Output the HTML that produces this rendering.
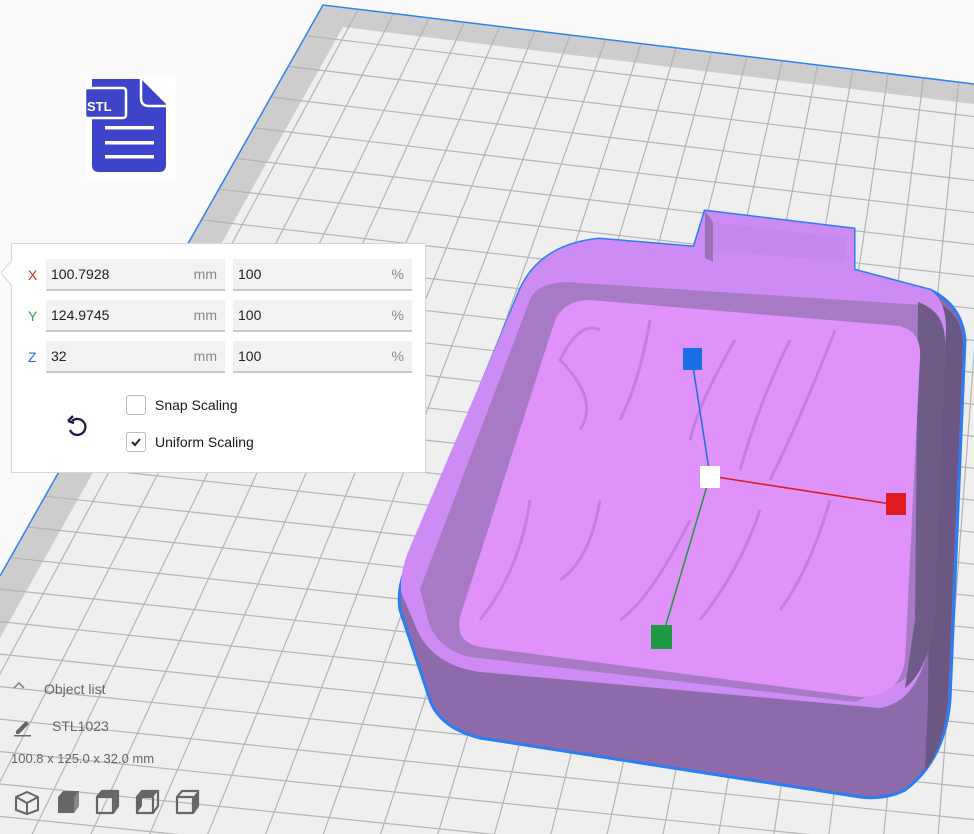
<!DOCTYPE html>
<html><head><meta charset="utf-8"><style>
html,body{margin:0;padding:0;width:974px;height:834px;overflow:hidden;background:#fafafa;font-family:"Liberation Sans",sans-serif}
#scene{position:absolute;left:0;top:0;display:block}
.panel{position:absolute;left:11px;top:243px;width:415px;height:230px;background:#fff;border:1px solid #d6d6d6;box-sizing:border-box}
.fld{position:absolute;height:32px;background:#f2f2f2;border-bottom:2px solid #c8c8c8;box-sizing:border-box;font-size:14px;color:#222;line-height:31px;padding-left:5px}
.fld .u{position:absolute;right:8px;top:0;color:#8a8a8a}
.lab{position:absolute;font-size:14px;line-height:32px}
.cb{position:absolute;left:114px;width:20px;height:20px;border:1px solid #bbb;border-radius:3px;box-sizing:border-box;background:#fff}
.ct{position:absolute;left:143px;font-size:14px;color:#1a1a1a}
.txt{position:absolute;font-size:13px;color:#666}
</style></head><body>
<svg id="scene" width="974" height="834" xmlns="http://www.w3.org/2000/svg">
<defs><clipPath id="pc"><polygon points="323,5 974,84 974,834 0,834 0,576"/></clipPath></defs>
<polygon points="323,5 974,84 974,834 0,834 0,576" fill="#cdcdcd"/>
<g clip-path="url(#pc)">
<polygon points="343,27 974,104 974,834 -110,834" fill="#efefef"/>
<g id="grid" stroke="#b4b4b4" stroke-width="1.2" fill="none"></g>
</g>
<polyline points="0,576 323,5 974,84" fill="none" stroke="#2f80f0" stroke-width="1.5"/>
<!-- STL icon -->
<rect x="85" y="79" width="91" height="98" fill="#fff"/>
<path d="M92,79 H141 L166,104 V165 Q166,172 159,172 H99 Q92,172 92,165 Z" fill="#3d44c9"/>
<path d="M141,79 V98 Q141,106 149,106 H166" fill="none" stroke="#fff" stroke-width="2.5"/>
<rect x="85" y="88" width="41" height="30" rx="3" fill="#3d44c9" stroke="#fff" stroke-width="2.5"/>
<text x="87" y="111" fill="#fff" font-family="Liberation Sans" font-weight="bold" font-size="13">STL</text>
<rect x="105" y="126" width="49" height="3.5" fill="#fff"/><rect x="105" y="141" width="49" height="3.5" fill="#fff"/><rect x="105" y="155" width="49" height="3.5" fill="#fff"/>
<!-- object -->
<path d="M705,211 L854,229 L854,270 L930,290 Q962,305 965,340 L950,700 Q945,760 905,790 Q885,800 860,797 L480,738 Q440,728 430,700 L400,610 Q397,590 405,570 L520,290 Q540,245 599,239 L694,247 Z" fill="#8d6baa" stroke="#2a7df2" stroke-width="3"/>
<path d="M932,300 Q963,312 963,345 L948,700 Q943,750 925,770 L928,700 Z" fill="#6b5783"/>
<path d="M705,211 L854,229 L854,270 L930,290 Q950,302 945,345 L933,610 Q928,700 880,708 L480,672 Q430,665 415,625 L401,592 Q400,572 408,552 L520,290 Q540,245 599,239 L694,247 Z" fill="#cd8bf4"/>
<path d="M565,282 L923,305 Q945,312 945,342 L935,610 Q930,665 900,682 L855,702 L470,657 Q432,648 426,612 L420,589 L531,297 Q540,283 565,282 Z" fill="#a67ac5"/>
<path d="M918,302 Q945,312 945,342 L935,620 Q928,670 905,688 L915,620 Z" fill="#6e5b86"/>
<path d="M590,300 L900,326 Q922,332 920,358 L905,660 Q900,697 860,697 L480,647 Q455,642 460,617 L555,320 Q565,300 590,300 Z" fill="#de92fa"/>
<path d="M713,222 L845,238 L845,262 L713,250 Z" fill="#c588ec"/>
<path d="M705,211 L713,222 L713,262 L705,258 Z" fill="#9a72b8"/>
<g fill="none" stroke="#b272d8" stroke-width="3" opacity="0.6">
<path d="M600,330 Q580,320 560,360 Q600,400 580,430"/><path d="M650,320 Q640,380 620,420"/><path d="M735,340 Q700,400 690,440"/><path d="M790,340 Q760,400 740,470"/><path d="M835,330 Q800,420 770,480"/>
<path d="M530,500 Q520,570 480,620"/><path d="M600,500 Q590,560 560,580"/><path d="M690,520 Q650,600 620,620"/><path d="M760,510 Q740,570 700,620"/><path d="M830,500 Q810,570 780,610"/>
</g>
<line x1="692" y1="360" x2="710" y2="476" stroke="#1a6ee8" stroke-width="1.5"/>
<line x1="710" y1="476" x2="897" y2="505" stroke="#e01a1a" stroke-width="1.5"/>
<line x1="710" y1="476" x2="662" y2="638" stroke="#1f9a3a" stroke-width="1.5"/>
<rect x="683" y="348" width="19" height="22" fill="#1a6ee8"/>
<rect x="700" y="466" width="20" height="22" fill="#fff"/>
<rect x="886" y="493" width="20" height="22" fill="#dd1c24"/>
<rect x="651" y="625" width="21" height="24" fill="#1f9a44"/>
<!-- bottom left icons -->
<path d="M14,688 L19,683 L24,688" fill="none" stroke="#777" stroke-width="1.5"/>
<path d="M16,731 L26,721 L29,724 L19,734 L16,734 Z" fill="#666"/><rect x="14" y="735" width="17" height="1.5" fill="#666"/>
<g stroke="#666" stroke-width="2" fill="none" stroke-linejoin="round">
<path d="M27,792 L38,797 L38,810 L27,814 L16,810 L16,797 Z M16,797 L27,803 L38,797 M27,803 V814"/>
</g>
<path d="M58,797 L63,791 L79,791 L79,806 L74,813 L58,813 Z" fill="#666"/>
<path d="M74,797 L79,791 L79,806 L74,813 Z" fill="#888"/>
<g fill="none" stroke="#666" stroke-width="2.2" stroke-linejoin="round">
<path d="M97,797 H113 V813 H97 Z M97,797 L102,791 H118 V806 L113,813"/>
<path d="M137,797 H153 V813 H137 Z M137,797 L142,791 H158 V806 L153,813"/>
<path d="M177,797 H193 V813 H177 Z M177,797 L182,791 H198 V806 L193,813"/>
</g>
<path d="M102,791 H118 L113,797 H97 Z" fill="#666"/><path d="M113,797 L118,791 V806 L113,813 Z" fill="#666"/>
<path d="M137,797 L142,791 V806 L137,813 Z" fill="#666"/><path d="M142,791 H158 L153,797 H137 Z" fill="#666"/>
<path d="M193,797 L198,791 V806 L193,813 Z" fill="#666"/>
</svg>
<div class="panel">
<svg style="position:absolute;left:-11px;top:16px" width="12" height="30"><path d="M11,0 L0,13 L11,26" fill="#fff" stroke="#d6d6d6"/></svg>
<div class="lab" style="left:16px;top:15px;color:#e0262c">X</div>
<div class="lab" style="left:16px;top:56px;color:#33a650">Y</div>
<div class="lab" style="left:16px;top:97px;color:#2268e8">Z</div>
<div class="fld" style="left:34px;top:15px;width:179px">100.7928<span class="u">mm</span></div>
<div class="fld" style="left:221px;top:15px;width:179px">100<span class="u">%</span></div>
<div class="fld" style="left:34px;top:56px;width:179px">124.9745<span class="u">mm</span></div>
<div class="fld" style="left:221px;top:56px;width:179px">100<span class="u">%</span></div>
<div class="fld" style="left:34px;top:97px;width:179px">32<span class="u">mm</span></div>
<div class="fld" style="left:221px;top:97px;width:179px">100<span class="u">%</span></div>
<div class="cb" style="top:151px"></div><div class="ct" style="top:153px">Snap Scaling</div>
<div class="cb" style="top:188px"><svg width="18" height="18"><path d="M5,9 L8,12 L13,6" fill="none" stroke="#222" stroke-width="2"/></svg></div><div class="ct" style="top:190px">Uniform Scaling</div>
<svg style="position:absolute;left:52px;top:169px" width="26" height="26"><path d="M8,8 A8,8 0 1 1 6,17" fill="none" stroke="#1b1b4a" stroke-width="2.3"/><path d="M4,8 L9,3 M4,8 L10,10" stroke="#1b1b4a" stroke-width="2.3" fill="none"/></svg>
</div>
<div class="txt" style="left:44px;top:681px;font-size:14px">Object list</div>
<div class="txt" style="left:52px;top:718px;font-size:14px">STL1023</div>
<div class="txt" style="left:11px;top:751px">100.8 x 125.0 x 32.0 mm</div>
<script>
(function(){
var TL=[323,5],TR=[1100,100],BL=[-146,834],BR=[1100,960];
function P(u,v){return [(1-u)*(1-v)*TL[0]+u*(1-v)*TR[0]+(1-u)*v*BL[0]+u*v*BR[0],(1-u)*(1-v)*TL[1]+u*(1-v)*TR[1]+(1-u)*v*BL[1]+u*v*BR[1]];}
function L(a,b){return '<line x1="'+a[0].toFixed(1)+'" y1="'+a[1].toFixed(1)+'" x2="'+b[0].toFixed(1)+'" y2="'+b[1].toFixed(1)+'"/>';}
var s='',NC=22,NR=27;
for(var i=1;i<NC;i++){s+=L(P(i/NC,0),P(i/NC,1));}
for(var j=1;j<NR;j++){s+=L(P(0,j/NR),P(1,j/NR));}
document.getElementById('grid').innerHTML=s;
})();
</script>
</body></html>
